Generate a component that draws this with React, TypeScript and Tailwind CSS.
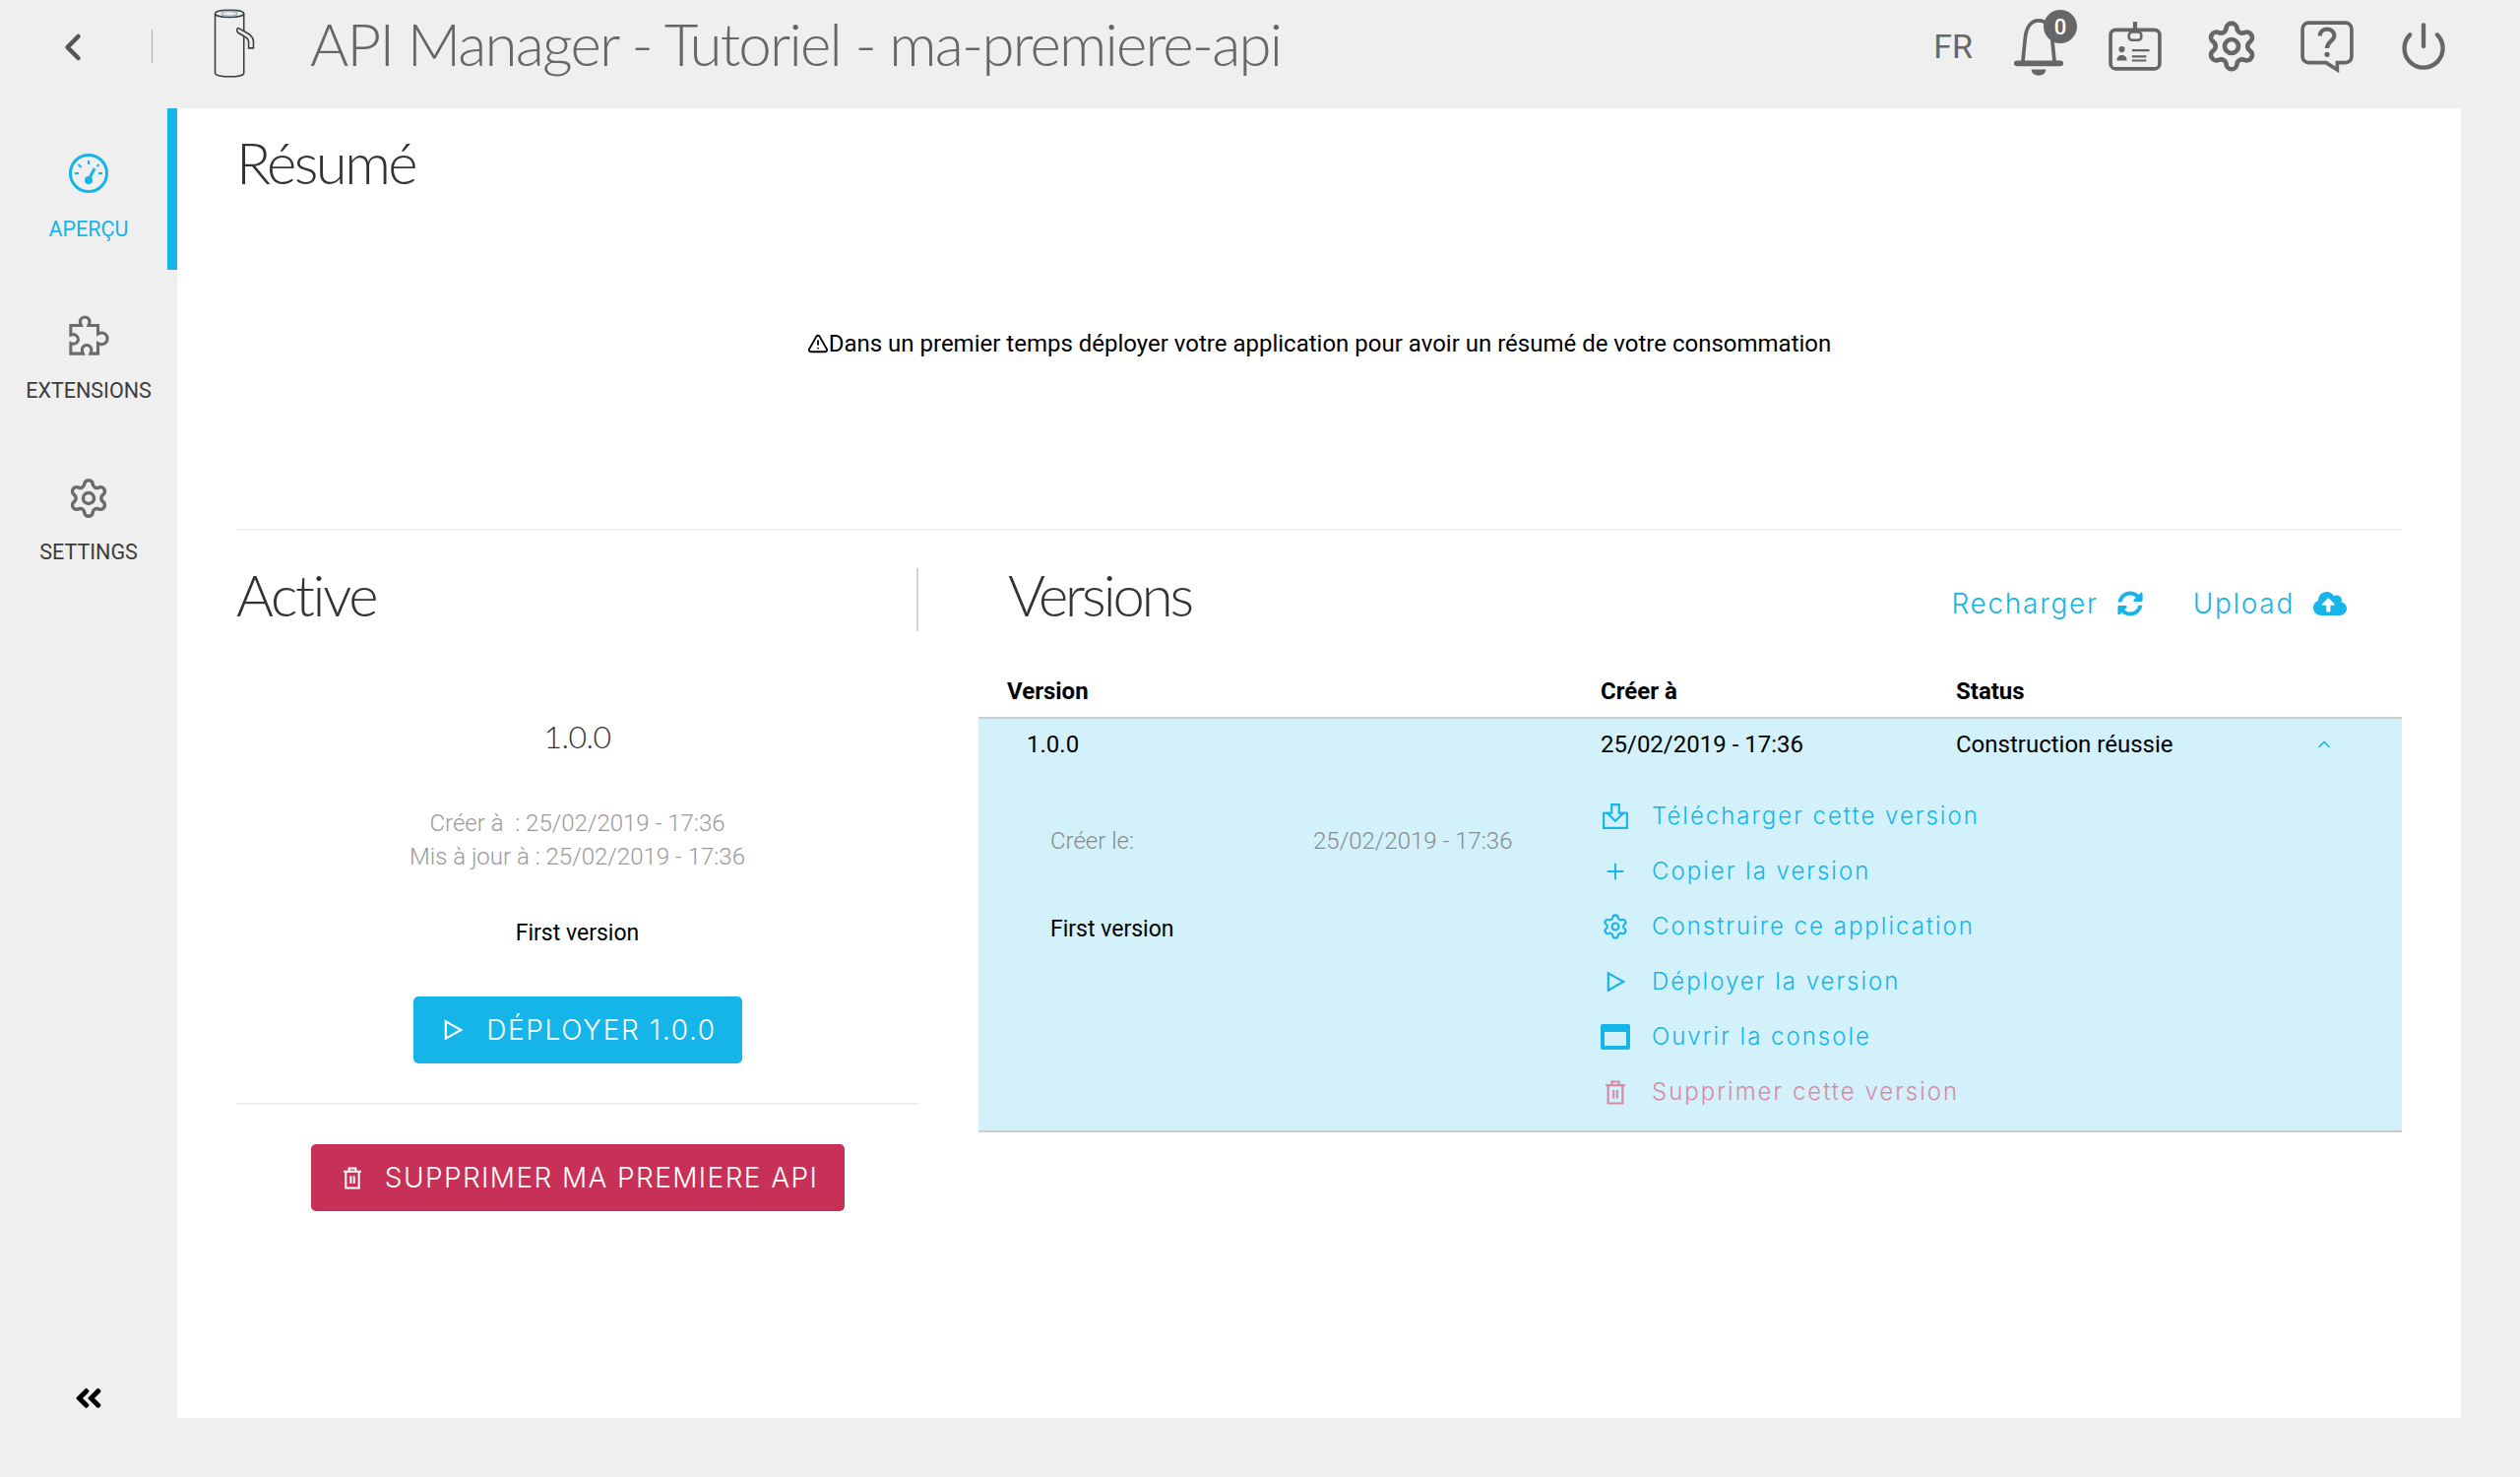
import React from "react";
import { ChevronLeft, ChevronUp, Plus, Power, Settings, TriangleAlert } from "lucide-react";
import { FaAngleDoubleLeft, FaCloudUploadAlt, FaSyncAlt } from "react-icons/fa";

const TrashIcon: React.FC<{ className?: string }> = ({ className }) => (
  <svg viewBox="3 1 18 22" fill="none" stroke="currentColor" strokeWidth="1.8" className={className}>
    <path d="M4 6h16M9 6V3h6v3M6 6v15h12V6M10.500 10v7M13.500 10v7" />
  </svg>
);

const PlayIcon: React.FC<{ className?: string }> = ({ className }) => (
  <svg viewBox="0 0 22 24" fill="none" stroke="currentColor" strokeWidth="2.400" className={className}>
    <path d="M2 2.500L19 12 2 21.500z" />
  </svg>
);

const DownloadIcon: React.FC<{ className?: string }> = ({ className }) => (
  <svg viewBox="0 0 26 26" fill="none" stroke="currentColor" strokeWidth="2" className={className}>
    <path d="M8 10H2v14h22V10h-6" />
    <path d="M9.500 2h7v8h4l-7.500 7.500L5.500 10h4z" />
  </svg>
);

const ConsoleIcon: React.FC<{ className?: string }> = ({ className }) => (
  <svg viewBox="0 0 30 26" className={className}>
    <path
      fill="currentColor"
      fillRule="evenodd"
      d="M2 0h26a2 2 0 0 1 2 2v22a2 2 0 0 1-2 2H2a2 2 0 0 1-2-2V2a2 2 0 0 1 2-2zM4 8v14h22V8z"
    />
  </svg>
);

const GaugeIcon: React.FC<{ className?: string }> = ({ className }) => (
  <svg viewBox="0 0 40 40" fill="none" stroke="currentColor" className={className}>
    <circle cx="20" cy="20" r="18.500" strokeWidth="3" />
    <path strokeWidth="2" d="M20 7v4M9.500 11l3 3M6 20h4M30 20h4M30.500 11l-2 2" />
    <path strokeWidth="3" d="M26 15l-5 10" />
    <circle cx="20" cy="27" r="4" fill="currentColor" stroke="none" />
  </svg>
);

const PuzzleIcon: React.FC<{ className?: string }> = ({ className }) => (
  <svg viewBox="0 0 44 44" fill="none" stroke="currentColor" strokeWidth="3.200" className={className}>
    <path d="M3 11h11c-3-6 1-9 4-9s7 3 4 9h10v9c6-3 10 1 10 5s-4 8-10 5v11H24c3-7-2-9-4-9s-7 2-4 9H3V30c6 2 8-2 8-4s-2-7-8-5z" />
  </svg>
);

const BellIcon: React.FC<{ className?: string }> = ({ className }) => (
  <svg viewBox="0 0 40 50" fill="none" stroke="currentColor" strokeWidth="3" className={className}>
    <path d="M7 38l2-20C10 9 14 4 20 4s10 5 11 14l2 20" />
    <path d="M2 39h36" strokeWidth="4.500" strokeLinecap="round" />
    <path d="M14 44h12a6 5 0 0 1-12 0z" fill="currentColor" stroke="none" />
  </svg>
);

const BadgeIcon: React.FC<{ className?: string }> = ({ className }) => (
  <svg viewBox="0 0 52 50" fill="none" stroke="currentColor" className={className}>
    <rect x="2" y="9" width="48" height="38" rx="5" strokeWidth="3.500" />
    <path d="M26 1v9" strokeWidth="4" />
    <rect x="20" y="11" width="12" height="8" rx="3" strokeWidth="2.500" />
    <circle cx="13" cy="28" r="3" fill="currentColor" stroke="none" />
    <path d="M8 39c0-7 10-7 10 0z" fill="currentColor" stroke="none" />
    <path d="M23 29h17M23 35h14M23 39h14" strokeWidth="2" />
  </svg>
);

const HelpIcon: React.FC<{ className?: string }> = ({ className }) => (
  <svg viewBox="0 0 52 52" fill="none" stroke="currentColor" className={className}>
    <path
      strokeWidth="3.500"
      d="M8 3h36a6 6 0 0 1 6 6v27a6 6 0 0 1-6 6h-8v7l-11-7H8a6 6 0 0 1-6-6V9a6 6 0 0 1 6-6z"
    />
    <path strokeWidth="4" d="M19 16c0-9 14-9 14 0 0 5-7 5-7 12" />
    <circle cx="26" cy="34" r="2.500" fill="currentColor" stroke="none" />
  </svg>
);

const LogoIcon: React.FC<{ className?: string }> = ({ className }) => (
  <svg viewBox="0 0 44 74" fill="none" stroke="#3a3f42" strokeWidth="1.600" className={className}>
    <path d="M2 6c0-5 30-5 30 0v62c0 5-30 5-30 0z" />
    <path d="M2 6c0 5 30 5 30 0" />
    <ellipse cx="17" cy="6" rx="8" ry="2.500" stroke="#9fb4bc" />
    <path d="M26 21l9 5c4 2 7 5 7 9v7h-5v-6c0-3-2-5-4-6l-7-4c-2-2-1-5 0-5z" fill="#efefef" />
  </svg>
);

const NavItem: React.FC<{
  icon: React.ReactNode;
  label: string;
  active?: boolean;
}> = ({ icon, label, active }) => (
  <div
    className={
      (active ? "text-[#15b5ea] border-[#15b5ea]" : "text-[#3c3c3c] border-transparent") +
      " h-[164px] border-r-[10px] flex flex-col items-center pt-[46px] pl-[10px]"
    }
  >
    <div className={(active ? "" : "text-[#6b6b6b] ") + "h-[40px] mb-[24px]"}>{icon}</div>
    <span className="text-[21.500px] leading-[26px]">{label}</span>
  </div>
);

const ActionRow: React.FC<{
  icon: React.ReactNode;
  label: string;
  danger?: boolean;
}> = ({ icon, label, danger }) => (
  <div
    className={
      (danger ? "text-[#d98aa3]" : "text-[#15b5ea]") +
      " h-[56px] flex items-center font-['Inter'] font-light text-[24px] tracking-[2px]"
    }
  >
    <span className="w-[30px] mr-[22px] flex justify-center">{icon}</span>
    {label}
  </div>
);

const headingClass = "font-['Lato',sans-serif] font-light text-[58px] leading-[60px] text-[#333333]";

const App: React.FC = () => {
  return (
    <div className="w-[2560px] h-[1500px] bg-[#efefef] font-['Roboto',sans-serif] overflow-hidden">
      <header className="h-[110px] flex items-center text-[#666666] pb-[16px]">
        <ChevronLeft size={44} strokeWidth={2.5} className="ml-[52px] mt-[2px] text-[#555555]" />
        <div className="w-px h-[34px] bg-[#aaaaaa] ml-[58px] mr-[60px]"></div>
        <LogoIcon className="w-[46px] h-[72px] mr-[54px] -mt-[6px]" />
        <h1 className="font-['Lato',sans-serif] font-light text-[60px] leading-none text-[#666666] tracking-[-1.800px] -mt-[6px]">
          API Manager - Tutoriel - ma-premiere-api
        </h1>
        <div className="ml-auto flex items-center mr-[72px]">
          <span className="text-[34px] mr-[42px]">FR</span>
          <div className="relative w-[50px] h-[62px] mr-[46px]">
            <BellIcon className="w-[50px] h-[62px]" />
            <span className="absolute -top-[6px] left-[30px] w-[34px] h-[34px] rounded-full bg-[#666666] text-white text-[22px] font-medium flex items-center justify-center">
              0
            </span>
          </div>
          <BadgeIcon className="w-[54px] h-[52px] mr-[43px]" />
          <Settings size={56} strokeWidth={2} className="mr-[42px]" />
          <HelpIcon className="w-[54px] h-[54px] mr-[45px]" />
          <Power size={52} strokeWidth={2} />
        </div>
      </header>

      <div className="flex h-[1330px]">
        <aside className="w-[180px] flex flex-col">
          <NavItem active icon={<GaugeIcon className="w-[40px] h-[40px]" />} label="APERÇU" />
          <NavItem icon={<PuzzleIcon className="w-[42px] h-[42px]" />} label="EXTENSIONS" />
          <NavItem icon={<Settings size={44} strokeWidth={1.9} />} label="SETTINGS" />
          <div className="mt-auto h-[40px] mb-[-4px] flex justify-center">
            <FaAngleDoubleLeft size={32} className="text-black" />
          </div>
        </aside>

        <main className="w-[2320px] bg-white pl-[60px] pr-[60px] text-black">
          <div className="h-[427px] pt-[25px]">
            <h2 className={headingClass + " tracking-[-2.500px]"}>Résumé</h2>
            <div className="text-[24px] leading-[28px] flex items-center justify-center mt-[140px]">
              <TriangleAlert size={22} strokeWidth={2} />
              Dans un premier temps déployer votre application pour avoir un résumé de votre consommation
            </div>
          </div>

          <div className="flex border-t-2 border-[#efefef]">
            <section className="w-[693px] shrink-0">
              <div className="h-[64px] flex items-start border-r-2 border-[#d4d4d4] mt-[38px]">
                <h2 className={headingClass + " tracking-[-2.300px] -mt-[3px]"}>Active</h2>
              </div>
              <div className="flex flex-col items-center">
                <div className="font-['Lato',sans-serif] font-light text-[32px] tracking-[-0.500px] leading-[40px] mt-[87px] text-[#333333]">1.0.0</div>
                <div className="text-[24px] leading-[34px] text-[#9a9a9a] text-center mt-[51px] font-light">
                  <div>Créer à &nbsp;: 25/02/2019 - 17:36</div>
                  <div>Mis à jour à : 25/02/2019 - 17:36</div>
                </div>
                <div className="text-[23px] leading-[28px] mt-[47px]">First version</div>
                <button className="mt-[50px] w-[334px] h-[68px] pl-[6px] rounded-[5px] bg-[#15b5ea] text-white flex items-center justify-center font-['Inter'] font-light text-[28px] tracking-[1.700px]">
                  <PlayIcon className="w-[20px] h-[22px] mr-[23px]" />
                  DÉPLOYER 1.0.0
                </button>
              </div>
              <div className="border-t-2 border-[#efefef] mt-[40px] flex justify-center pt-[40px]">
                <button className="w-[542px] h-[68px] pl-[6px] rounded-[5px] bg-[#c83157] text-white flex items-center justify-center font-['Inter'] font-light text-[28px] tracking-[1.400px]">
                  <TrashIcon className="w-[20px] h-[25px] mr-[23px]" />
                  SUPPRIMER MA PREMIERE API
                </button>
              </div>
            </section>

            <section className="ml-[61px] flex-1">
              <div className="h-[119px] pt-[35px] flex items-start pr-[56px] pl-[30px]">
                <h2 className={headingClass + " tracking-[-3.100px]"}>Versions</h2>
                <div className="ml-auto flex items-center text-[#15b5ea] font-['Inter'] font-light text-[28px] tracking-[1.700px] mt-[18px]">
                  Recharger
                  <FaSyncAlt size={26} className="ml-[19px] mr-[51px]" />
                  Upload
                  <FaCloudUploadAlt size={34} className="ml-[19px]" />
                </div>
              </div>

              <div className="grid grid-cols-[603px_361px_1fr] h-[72px] items-center border-b-2 border-[#cccccc] pl-[29px] pt-[18px] text-[24px] font-bold">
                <span>Version</span>
                <span>Créer à</span>
                <span>Status</span>
              </div>

              <div className="bg-[#d2f1fb] h-[420px] border-b-2 border-[#cccccc]">
                <div className="grid grid-cols-[583px_361px_1fr] h-[52px] items-center pl-[49px] text-[24px]">
                  <span>1.0.0</span>
                  <span>25/02/2019 - 17:36</span>
                  <span className="flex items-center pr-[69px] justify-between">
                    Construction réussie
                    <ChevronUp size={20} className="text-[#15b5ea]" />
                  </span>
                </div>
                <div className="flex mt-[19px]">
                  <div className="w-[559px] ml-[73px] shrink-0 pt-[39px] text-[24px]">
                    <div className="flex font-light text-[#8a8a8a] leading-[28px]">
                      <span className="w-[267px]">Créer le:</span>
                      <span>25/02/2019 - 17:36</span>
                    </div>
                    <div className="mt-[62px] text-[23px] leading-[28px]">First version</div>
                  </div>
                  <div>
                    <ActionRow icon={<DownloadIcon className="w-[28px] h-[28px]" />} label="Télécharger cette version" />
                    <ActionRow icon={<Plus size={26} strokeWidth={1.8} />} label="Copier la version" />
                    <ActionRow icon={<Settings size={28} strokeWidth={1.8} />} label="Construire ce application" />
                    <ActionRow icon={<PlayIcon className="w-[20px] h-[22px] ml-[2px]" />} label="Déployer la version" />
                    <ActionRow icon={<ConsoleIcon className="w-[30px] h-[26px]" />} label="Ouvrir la console" />
                    <ActionRow danger icon={<TrashIcon className="w-[22px] h-[27px]" />} label="Supprimer cette version" />
                  </div>
                </div>
              </div>
            </section>
          </div>
        </main>
      </div>
    </div>
  );
};

export default App;
